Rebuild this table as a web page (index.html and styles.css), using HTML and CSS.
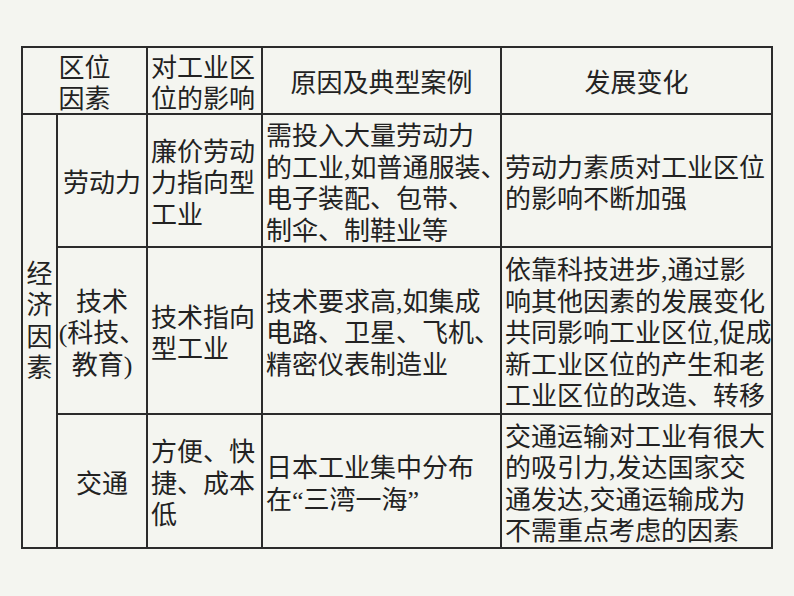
FILE: index.html
```html
<!DOCTYPE html>
<html lang="zh-CN">
<head>
<meta charset="utf-8">
<title>工业区位因素</title>
<link rel="stylesheet" href="styles.css">
</head>
<body>
<div class="table">
  <div class="cell center span-2">区位<br>因素</div>
  <div class="cell">对工业区<br>位的影响</div>
  <div class="cell center">原因及典型案例</div>
  <div class="cell center">发展变化</div>

  <div class="cell center side">经<br>济<br>因<br>素</div>

  <div class="cell center">劳动力</div>
  <div class="cell">廉价劳动<br>力指向型<br>工业</div>
  <div class="cell">需投入大量劳动力<br>的工业,如普通服装、<br>电子装配、包带、<br>制伞、制鞋业等</div>
  <div class="cell">劳动力素质对工业区位<br>的影响不断加强</div>

  <div class="cell center">技术<br>(科技、<br>教育)</div>
  <div class="cell">技术指向<br>型工业</div>
  <div class="cell">技术要求高,如集成<br>电路、卫星、飞机、<br>精密仪表制造业</div>
  <div class="cell">依靠科技进步,通过影<br>响其他因素的发展变化<br>共同影响工业区位,促成<br>新工业区位的产生和老<br>工业区位的改造、转移</div>

  <div class="cell center">交通</div>
  <div class="cell">方便、快<br>捷、成本<br>低</div>
  <div class="cell">日本工业集中分布<br>在“三湾一海”</div>
  <div class="cell">交通运输对工业有很大<br>的吸引力,发达国家交<br>通发达,交通运输成为<br>不需重点考虑的因素</div>
</div>
</body>
</html>
```
FILE: styles.css
```css
html, body {
  margin: 0;
  padding: 0;
  background: #f4f5f0;
}

body {
  font-family: "Liberation Serif", "Noto Sans CJK SC", serif;
  color: #222;
}

.table {
  display: grid;
  grid-template-columns: 33px 88px 113px 237px 269px;
  grid-template-rows: 65px 131px 165px 132px;
  gap: 2px;
  padding: 2px;
  background: #2b2b2b;
  width: max-content;
  margin: 46px 0 0 21px;
}

.cell {
  background: #f4f5f0;
  display: flex;
  align-items: center;
  padding: 7px 0 0 3px;
  font-size: 26px;
  line-height: 31.5px;
  white-space: nowrap;
  overflow: visible;
}

.center {
  justify-content: center;
  text-align: center;
  padding-left: 0;
}

.span-2 {
  grid-column: span 2;
}

.side {
  grid-row: span 3;
  padding-bottom: 26px;
}
```
